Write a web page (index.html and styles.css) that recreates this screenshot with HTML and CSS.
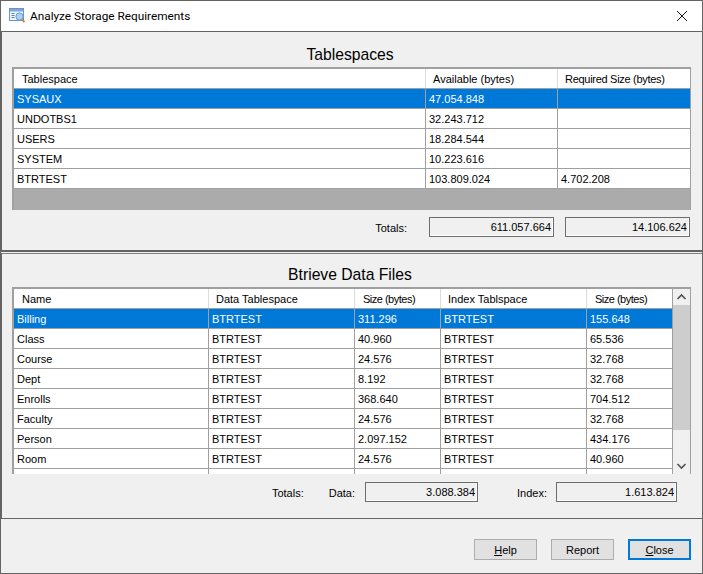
FILE: index.html
```html
<!DOCTYPE html>
<html lang="en">
<head>
<meta charset="utf-8">
<title>Analyze Storage Requirements</title>
<link rel="stylesheet" href="styles.css">
</head>
<body>
<div class="window">
  <header class="titlebar">
    <svg class="app-icon" width="18" height="18" viewBox="0 0 18 18">
      <rect x="0.5" y="1.5" width="14" height="12" fill="#eef4fb" stroke="#6f94c4"/>
      <rect x="1" y="2" width="13" height="2.5" fill="#7fa6d6"/>
      <path d="M2.5 6.5h3M2.5 8.5h3M2.5 10.5h3" stroke="#5b7fae" fill="none"/>
      <circle cx="10.5" cy="9.5" r="3.6" fill="#a9d2f2" stroke="#6a9ccf"/>
      <path d="M13 12.5l2.5 2.5" stroke="#c9803c" stroke-width="2" fill="none"/>
    </svg>
    <span class="window-title">Analyze Storage Requirements</span>
    <svg class="close-x" width="12" height="12" viewBox="0 0 12 12">
      <path d="M1 1l10 10M11 1L1 11" stroke="#111" stroke-width="1" fill="none"/>
    </svg>
  </header>

  <section class="panel panel-top">
    <h2 class="panel-title">Tablespaces</h2>
    <div class="grid grid-ts">
      <div class="row head"><div>Tablespace</div><div>Available (bytes)</div><div class="tight-long">Required Size (bytes)</div></div>
      <div class="row selected"><div>SYSAUX</div><div>47.054.848</div><div></div></div>
      <div class="row"><div>UNDOTBS1</div><div>32.243.712</div><div></div></div>
      <div class="row"><div>USERS</div><div>18.284.544</div><div></div></div>
      <div class="row"><div>SYSTEM</div><div>10.223.616</div><div></div></div>
      <div class="row"><div>BTRTEST</div><div>103.809.024</div><div>4.702.208</div></div>
    </div>
    <div class="totals totals-ts">
      <span class="label label-ts">Totals:</span>
      <output class="box box-ts">611.057.664</output>
      <output class="box box-ts">14.106.624</output>
    </div>
  </section>

  <section class="panel panel-bottom">
    <h2 class="panel-title">Btrieve Data Files</h2>
    <div class="grid grid-files">
      <div class="rows">
        <div class="row head"><div>Name</div><div>Data Tablespace</div><div class="tight-short">Size (bytes)</div><div>Index Tablspace</div><div class="tight-short">Size (bytes)</div></div>
        <div class="row selected"><div>Billing</div><div>BTRTEST</div><div>311.296</div><div>BTRTEST</div><div>155.648</div></div>
        <div class="row"><div>Class</div><div>BTRTEST</div><div>40.960</div><div>BTRTEST</div><div>65.536</div></div>
        <div class="row"><div>Course</div><div>BTRTEST</div><div>24.576</div><div>BTRTEST</div><div>32.768</div></div>
        <div class="row"><div>Dept</div><div>BTRTEST</div><div>8.192</div><div>BTRTEST</div><div>32.768</div></div>
        <div class="row"><div>Enrolls</div><div>BTRTEST</div><div>368.640</div><div>BTRTEST</div><div>704.512</div></div>
        <div class="row"><div>Faculty</div><div>BTRTEST</div><div>24.576</div><div>BTRTEST</div><div>32.768</div></div>
        <div class="row"><div>Person</div><div>BTRTEST</div><div>2.097.152</div><div>BTRTEST</div><div>434.176</div></div>
        <div class="row"><div>Room</div><div>BTRTEST</div><div>24.576</div><div>BTRTEST</div><div>40.960</div></div>
        <div class="row"><div></div><div></div><div></div><div></div><div></div></div>
      </div>
      <div class="scrollbar">
        <svg class="arrow" width="17" height="16" viewBox="0 0 17 16"><path d="M4.5 10l4-4 4 4" stroke="#505050" stroke-width="1.6" fill="none"/></svg>
        <div class="thumb"></div>
        <svg class="arrow" width="17" height="16" viewBox="0 0 17 16"><path d="M4.5 6l4 4 4-4" stroke="#505050" stroke-width="1.6" fill="none"/></svg>
      </div>
    </div>
    <div class="totals totals-files">
      <span class="label">Totals:</span>
      <span class="label label-data">Data:</span>
      <output class="box box-data">3.088.384</output>
      <span class="label label-index">Index:</span>
      <output class="box box-index">1.613.824</output>
    </div>
  </section>

  <footer class="footer">
    <button class="btn" type="button"><u>H</u>elp</button>
    <button class="btn" type="button">Report</button>
    <button class="btn btn-default" type="button"><u>C</u>lose</button>
  </footer>
</div>
</body>
</html>
```

FILE: styles.css
```css
* { box-sizing: border-box; }
html, body { margin: 0; padding: 0; }
body {
  width: 703px;
  height: 574px;
  overflow: hidden;
  font-family: "Liberation Sans", Arial, sans-serif;
  font-size: 11px;
  color: #000;
  background: #f0f0f0;
}
.window {
  width: 703px;
  height: 574px;
  border: 1px solid #646464;
  display: flex;
  flex-direction: column;
  background: #f0f0f0;
}
.titlebar {
  height: 31px;
  flex: none;
  display: flex;
  align-items: center;
  background: #fff;
  border-bottom: 1px solid #646464;
  padding: 0 14px 1px 8px;
}
.app-icon { flex: none; margin-right: 3px; }
.window-title {
  font-family: Roboto, "Noto Sans", sans-serif;
  font-size: 11.8px;
  flex: 1;
}
.close-x { flex: none; }

.panel {
  border-left: 1px solid #646464;
  padding: 0 11px 0 10px;
  flex: none;
}
.panel-top { height: 220px; border-bottom: 2px solid #646464; }
.panel-bottom {
  height: 266px;
  margin-top: 1px;
  border-top: 1px solid #808080;
  border-bottom: 1px solid #646464;
}
.panel-title {
  margin: 0 0 2px;
  padding: 13px 3px 0 0;
  font-size: 15.7px;
  line-height: 20px;
  font-weight: 400;
  text-align: center;
}
.panel-bottom .panel-title { padding-top: 11px; }

.grid {
  width: 679px;
  border-top: 2px solid #a0a0a0;
  border-left: 2px solid #a0a0a0;
  border-right: 1px solid #a0a0a0;
  overflow: hidden;
}
.grid-ts { height: 143px; background: #ababab; }
.grid-files { height: 187px; display: flex; background: #fff; }
.rows { flex: none; width: 659px; }

.row {
  display: grid;
  height: 20px;
  background: #fff;
  border-bottom: 1px solid #a0a0a0;
}
.grid-ts .row { grid-template-columns: 412px 132px 132px; }
.grid-files .row { grid-template-columns: 195px 146px 86px 146px 86px; }
.row > div {
  padding-left: 3px;
  line-height: 21px;
  border-right: 1px solid #a0a0a0;
  white-space: nowrap;
  overflow: hidden;
}
.row > div:last-child { border-right: 0; }
.grid-files .row > div:last-child { border-right: 1px solid #a0a0a0; }
.row.head > div { padding-left: 8px; border-right-color: #dcdcdc; }
.row.head > div + div { padding-left: 7px; }
.row.head .tight-long { letter-spacing: -0.29px; }
.row.head .tight-short { letter-spacing: -0.5px; padding-left: 8px; }
.row.selected { background: #0078d7; color: #fff; }

.scrollbar {
  flex: none;
  width: 17px;
  display: flex;
  flex-direction: column;
  background: #f0f0f0;
}
.arrow { flex: none; display: block; }
.thumb { flex: none; height: 125px; background: #cdcdcd; margin-bottom: 28px; }

.totals { display: flex; align-items: center; }
.totals-ts { margin-top: 7px; padding-right: 1px; justify-content: flex-end; }
.totals-files { margin-top: 8px; padding-right: 14px; justify-content: flex-end; }
.label { padding-top: 2px; }
.label-ts { margin-right: 22px; }
.label-data { margin-left: 25px; margin-right: 10px; }
.label-index { margin-left: 39px; margin-right: 9px; }
.box {
  display: block;
  height: 20px;
  line-height: 19px;
  padding-right: 2px;
  text-align: right;
  background: #f0f0f0;
  border: 1px solid #6d6d6d;
  box-shadow: inset -1px -1px 0 #fff;
}
.box-ts { width: 125px; }
.box-ts + .box-ts { margin-left: 11px; }
.box-data { width: 113px; }
.box-index { width: 121px; }

.footer {
  flex: 1;
  display: flex;
  justify-content: flex-end;
  gap: 14px;
  padding: 20px 11px 0 0;
}
.btn {
  width: 63px;
  height: 21px;
  padding: 1px 0 0;
  font: 11px "Liberation Sans", Arial, sans-serif;
  color: #000;
  background: #e1e1e1;
  border: 1px solid #adadad;
}
.btn-default { border: 2px solid #0078d7; }
```
